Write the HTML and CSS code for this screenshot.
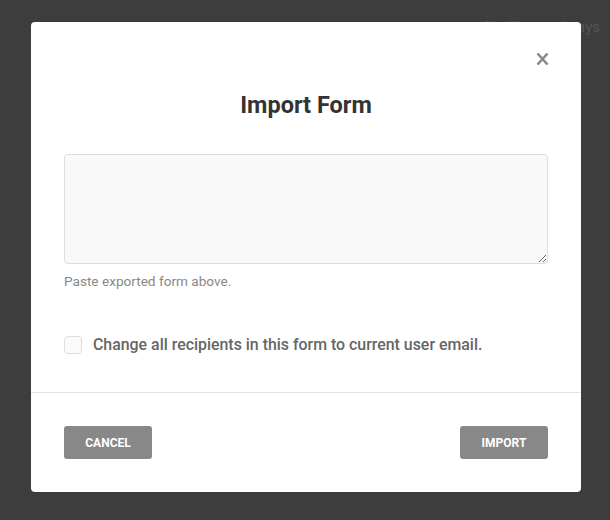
FILE: index.html
```html
<!DOCTYPE html>
<html>
<head>
<meta charset="utf-8">
<link rel="stylesheet" href="styles.css">
</head>
<body>
<div class="page">
  <div class="page-text">Notify me always</div>
</div>
<div class="modal">
  <div class="modal-body">
    <div class="close-row">
      <button class="close" aria-label="Close">
        <svg width="13" height="12" viewBox="0 0 13 12"><path d="M1.5 0.5 L11.5 11.5 M11.5 0.5 L1.5 11.5" stroke="#888" stroke-width="2.5" stroke-linecap="butt"/></svg>
      </button>
    </div>
    <h2 class="title">Import Form</h2>
    <textarea class="import-area"></textarea>
    <div class="help">Paste exported form above.</div>
    <label class="check-row">
      <span class="checkbox"></span>
      <span class="check-label">Change all recipients in this form to current user email.</span>
    </label>
  </div>
  <div class="modal-footer">
    <button class="btn">CANCEL</button>
    <button class="btn">IMPORT</button>
  </div>
</div>
</body>
</html>
```

FILE: styles.css
```css
html, body {
  margin: 0;
  padding: 0;
  background: #3d3d3d;
  font-family: Roboto, "Liberation Sans", sans-serif;
  width: 610px;
  height: 520px;
  overflow: hidden;
}
.page {
  display: flex;
  justify-content: flex-end;
  padding: 18px 10px 0 0;
}
.page-text {
  color: #555;
  font-size: 15px;
  line-height: 18px;
}
.modal {
  position: absolute;
  left: 31px;
  top: 22px;
  width: 550px;
  height: 470px;
  background: #fff;
  border-radius: 4px;
  display: flex;
  flex-direction: column;
}
.modal-body {
  padding: 31px 33px 0 33px;
  height: 371px;
  box-sizing: border-box;
  border-bottom: 1px solid #e5e5e5;
}
.close-row {
  display: flex;
  justify-content: flex-end;
}
.close {
  border: 0;
  background: none;
  padding: 0;
  margin-right: -1px;
  width: 13px;
  height: 12px;
  display: block;
}
.close svg { display: block; }
.title {
  margin: 27px 0 0 0;
  text-align: center;
  font-size: 23.5px;
  line-height: 26px;
  font-weight: 700;
  color: #333;
}
.import-area {
  display: block;
  margin-top: 36px;
  width: 484px;
  height: 110px;
  box-sizing: border-box;
  background: #f9f9f9;
  border: 1px solid #ddd;
  border-radius: 4px;
  resize: vertical;
  font-family: inherit;
}
.help {
  margin-top: 8px;
  font-size: 13.6px;
  line-height: 18px;
  color: #888;
}
.check-row {
  display: flex;
  align-items: center;
  gap: 11px;
  margin-top: 45px;
}
.checkbox {
  width: 18px;
  height: 18px;
  box-sizing: border-box;
  border: 1px solid #ddd;
  border-radius: 4px;
  background: #fafafa;
  flex: none;
}
.check-label {
  font-size: 15.9px;
  line-height: 20px;
  font-weight: 500;
  color: #666;
}
.modal-footer {
  display: flex;
  justify-content: space-between;
  padding: 33px;
}
.btn {
  width: 88px;
  height: 33px;
  border: 0;
  border-radius: 3px;
  background: #888;
  color: #fff;
  font-family: Roboto, "Liberation Sans", sans-serif;
  font-weight: 700;
  font-size: 12px;
  padding: 0;
}
```
